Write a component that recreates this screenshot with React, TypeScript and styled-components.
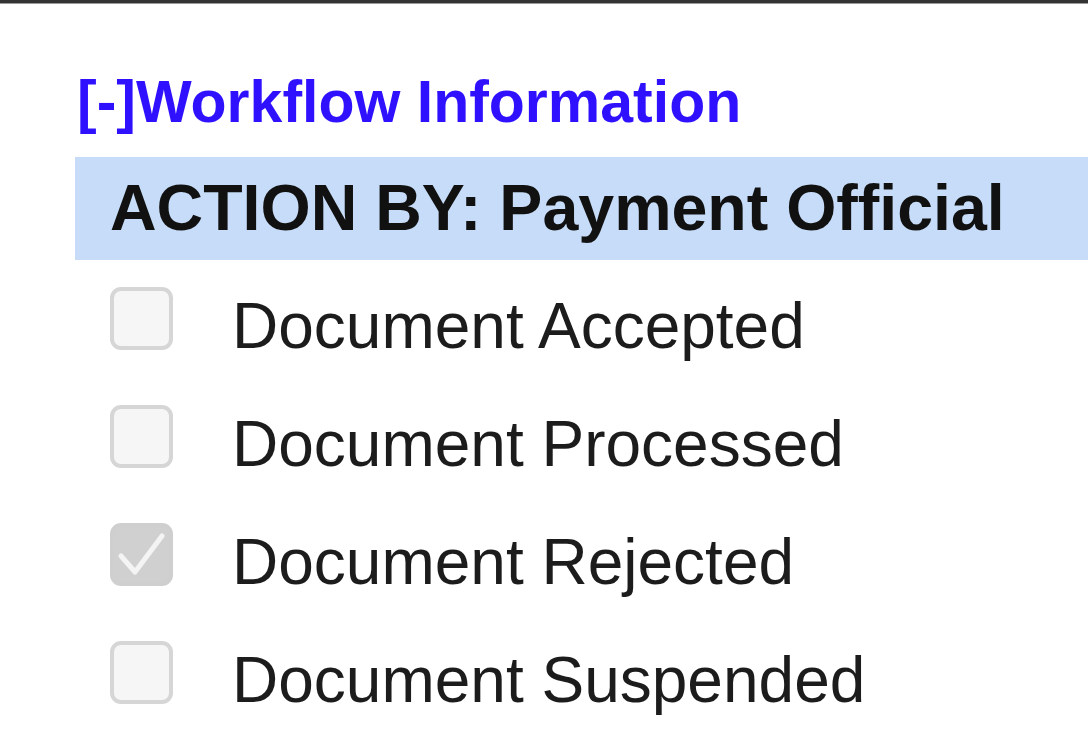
import React from 'react'
import styled, { createGlobalStyle } from 'styled-components'

const GlobalStyle = createGlobalStyle`
  html, body {
    margin: 0;
    padding: 0;
    background: #fff;
  }
  body {
    font-family: 'Liberation Sans', Arial, sans-serif;
  }
`

const items = [
  { label: 'Document Accepted', checked: false },
  { label: 'Document Processed', checked: false },
  { label: 'Document Rejected', checked: true },
  { label: 'Document Suspended', checked: false },
]

export default function App() {
  return (
    <Page>
      <GlobalStyle />
      <Section>
        <Toggle href="#">[-]Workflow Information</Toggle>
        <ActionBar>ACTION BY: Payment Official</ActionBar>
        <List>
          {items.map((item) => (
            <Row key={item.label}>
              <Box $checked={item.checked}>
                {item.checked && (
                  <svg width="55" height="55" viewBox="0 0 55 55">
                    <path
                      d="M7 29 L21 45 L48 9"
                      fill="none"
                      stroke="#f4f4f4"
                      strokeWidth="5"
                      strokeLinecap="round"
                      strokeLinejoin="round"
                    />
                  </svg>
                )}
              </Box>
              <Label>{item.label}</Label>
            </Row>
          ))}
        </List>
      </Section>
    </Page>
  )
}

const Page = styled.div`
  width: 100vw;
  height: 100vh;
  box-sizing: border-box;
  border-top: 3px solid #333;
  box-shadow: inset 0 1px 0 #9a9a9a;
  overflow: hidden;
`

const Section = styled.div`
  padding: 66px 0 0 75px;
  display: flex;
  flex-direction: column;
`

const Toggle = styled.a`
  display: block;
  padding-left: 2px;
  font-size: 59px;
  line-height: 66px;
  font-weight: bold;
  color: #2f10ff;
  text-decoration: none;
  margin-bottom: 22px;
`

const ActionBar = styled.div`
  background: #c6dcf8;
  height: 103px;
  line-height: 103px;
  padding-left: 35px;
  font-size: 64.5px;
  font-weight: bold;
  color: #111;
  white-space: nowrap;
`

const List = styled.div`
  padding-top: 7px;
  display: flex;
  flex-direction: column;
`

const Row = styled.div`
  display: flex;
  align-items: flex-start;
  height: 118px;
  padding-left: 35px;
`

const Box = styled.span<{ $checked: boolean }>`
  box-sizing: border-box;
  width: 63px;
  height: 63px;
  margin-top: 20px;
  border: 4px solid ${(p) => (p.$checked ? '#cfcfcf' : '#d6d6d6')};
  border-radius: 11px;
  background: ${(p) => (p.$checked ? '#d0d0d0' : '#f6f6f6')};
  display: flex;
  align-items: center;
  justify-content: center;
  flex-shrink: 0;
`

const Label = styled.span`
  margin-left: 59px;
  font-size: 64px;
  line-height: 118px;
  color: #1c1c1c;
  white-space: nowrap;
`
